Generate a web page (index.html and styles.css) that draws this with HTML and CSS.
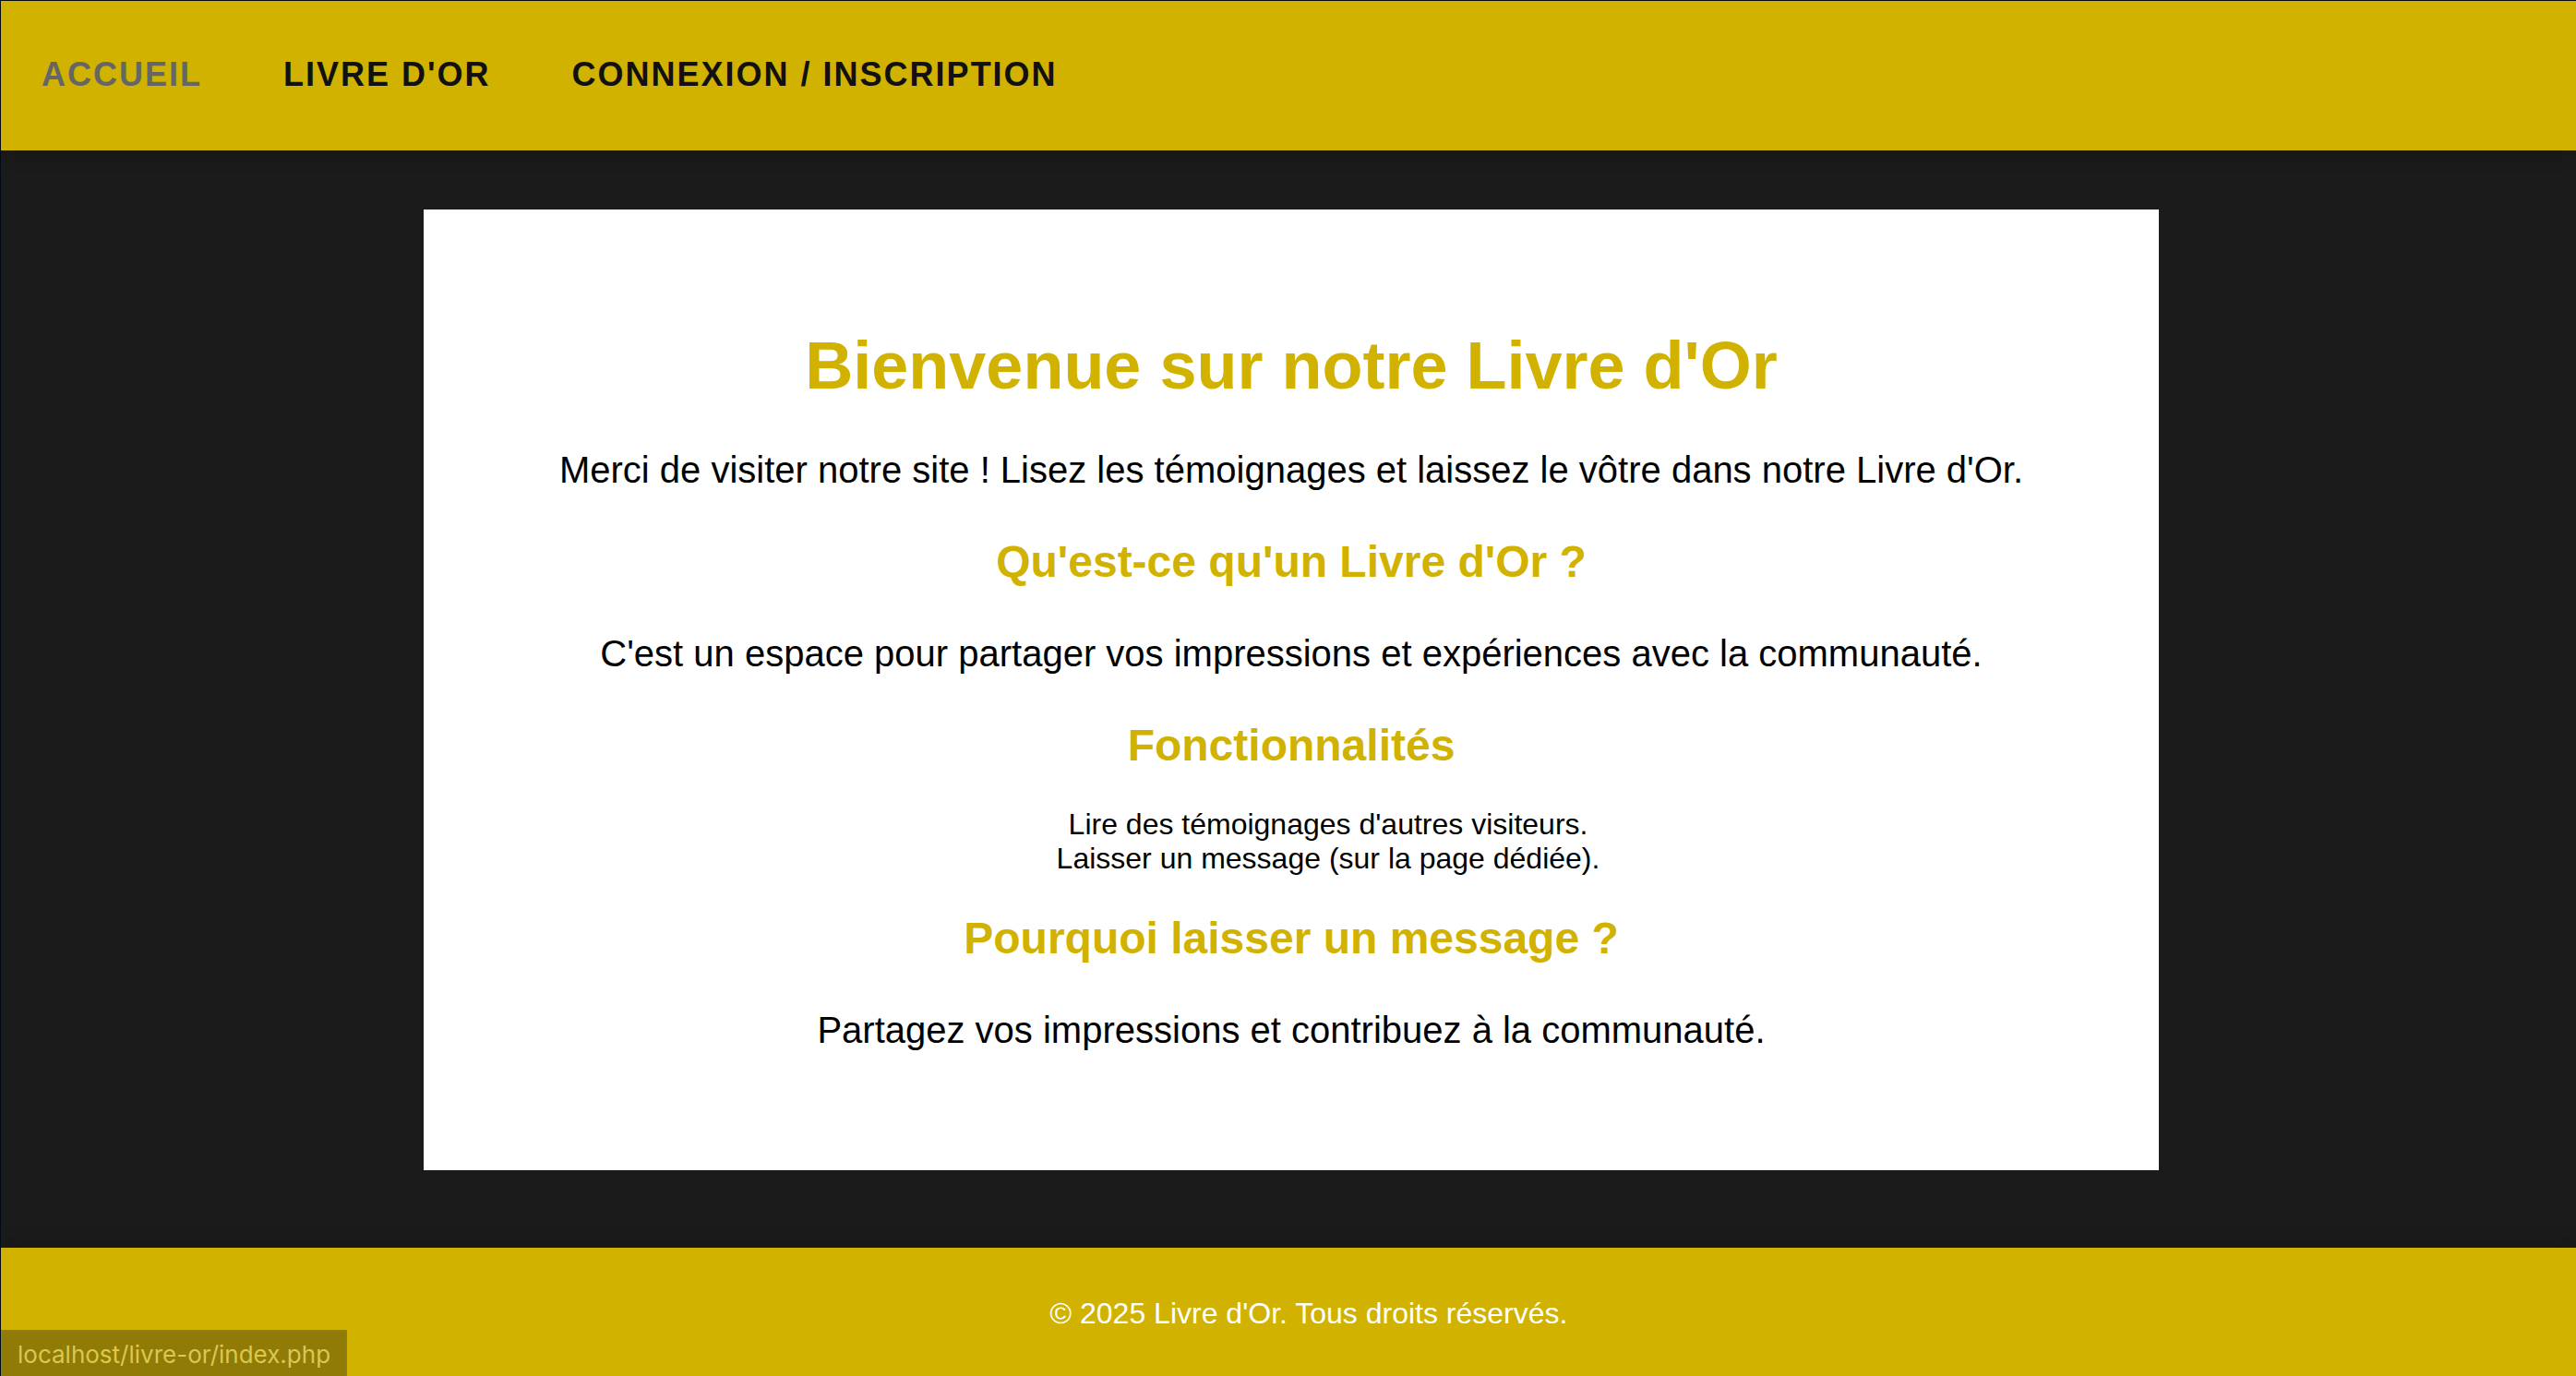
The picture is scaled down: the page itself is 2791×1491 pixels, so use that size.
FILE: index.html
```
<!DOCTYPE html>
<html lang="fr">
<head>
<meta charset="utf-8">
<title>Livre d'Or</title>
<link rel="stylesheet" href="styles.css">
</head>
<body>
<header class="header">
<nav class="nav">
<a class="nav-link active" href="#">Accueil</a>
<a class="nav-link" href="#">Livre d'Or</a>
<a class="nav-link" href="#">Connexion / Inscription</a>
</nav>
</header>
<div class="content">
<main class="main">
<h1>Bienvenue sur notre Livre d'Or</h1>
<p>Merci de visiter notre site ! Lisez les témoignages et laissez le vôtre dans notre Livre d'Or.</p>
<h2>Qu'est-ce qu'un Livre d'Or ?</h2>
<p>C'est un espace pour partager vos impressions et expériences avec la communauté.</p>
<h2>Fonctionnalités</h2>
<ul class="features">
<li>Lire des témoignages d'autres visiteurs.</li>
<li>Laisser un message (sur la page dédiée).</li>
</ul>
<h2>Pourquoi laisser un message ?</h2>
<p>Partagez vos impressions et contribuez à la communauté.</p>
</main>
</div>
<footer class="footer">
<p class="copyright">© 2025 Livre d'Or. Tous droits réservés.</p>
</footer>
<div class="status">localhost/livre-or/index.php</div>
</body>
</html>
```
FILE: styles.css
```
* { box-sizing: border-box; }
body {
  margin: 0;
  min-height: 100vh;
  display: flex;
  flex-direction: column;
  background: #1b1b1b;
  color: #000;
  font-family: "Liberation Sans", Arial, sans-serif;
  font-size: 32px;
  border-top: 1px solid #020a14;
  border-left: 1px solid #020a14;
}
.header {
  background: #d1b200;
  padding: 60px 44px 62px;
  box-shadow: 0 4px 20px rgba(0, 0, 0, 0.2);
}
.nav { display: flex; gap: 88px; }
.nav-link {
  color: #111;
  font-size: 36px;
  line-height: 40px;
  font-weight: bold;
  letter-spacing: 2px;
  text-transform: uppercase;
  text-decoration: none;
}
.nav-link.active { color: #666; }
.content { padding: 64px 0 64px 6px; }
.main {
  width: 1880px;
  max-width: 90%;
  margin: 0 auto;
  padding: 128px 80px 124px;
  background: #fff;
  text-align: center;
}
h1, h2 { color: #d1b200; margin: 0; }
h1 { font-size: 72px; line-height: 82px; }
h2 { font-size: 48px; line-height: 55px; }
p { margin: 44px 0; font-size: 40px; line-height: 56px; }
.main p:last-child { margin-bottom: 0; }
.features {
  list-style: none;
  margin: 40px 0;
  padding: 0 0 0 80px;
  line-height: 37px;
}
.footer {
  margin-top: auto;
  background: #d1b200;
  color: #fff;
  text-align: center;
  padding: 51px 0 48px;
  box-shadow: 0 -4px 20px rgba(0, 0, 0, 0.2);
}
.copyright { margin: 0; padding-left: 44px; font-size: 32px; line-height: 40px; }
.status {
  position: fixed;
  left: 1px;
  bottom: 0;
  padding: 8px 16px 6px;
  border: 2px solid #8c7f18;
  border-bottom: 0;
  background: #8f7b05;
  color: #dcc750;
  font-family: Inter, sans-serif;
  font-size: 26px;
  line-height: 34px;
}
```
